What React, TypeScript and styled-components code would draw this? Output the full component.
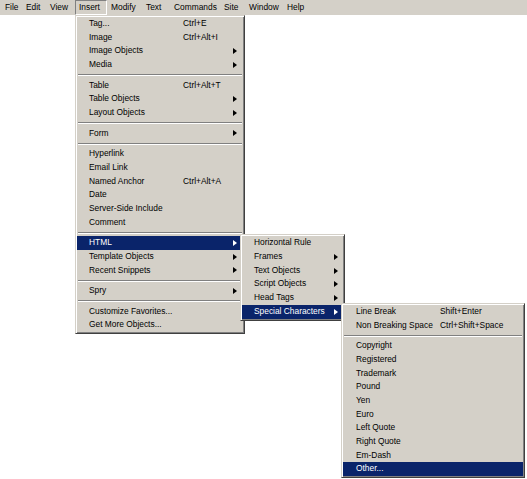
import React from "react";
import styled, { createGlobalStyle } from "styled-components";

const ROW_H = 13.7;
const SEP_H = 6.9;
const NAVY = "#0a246a";
const FACE = "#d4d0c8";

const GlobalStyle = createGlobalStyle`
  html, body { margin: 0; padding: 0; background: #ffffff; }
  body {
    font-family: "Liberation Sans", Arial, sans-serif;
    font-size: 8.4px;
    color: #000;
  }
`;

const Page = styled.div`
  position: relative;
  width: 527px;
  height: 479px;
  overflow: hidden;
  background: #ffffff;
`;

const MenuBar = styled.div`
  display: flex;
  align-items: stretch;
  height: 15px;
  padding-left: 1px;
  background: ${FACE};
`;

const MenuTitle = styled.div<{ $w: number; $pressed?: boolean }>`
  box-sizing: border-box;
  width: ${(p) => p.$w}px;
  height: 15px;
  line-height: ${(p) => (p.$pressed ? 13 : 15)}px;
  padding-left: ${(p) => (p.$pressed ? 3 : 4)}px;
  white-space: nowrap;
  border: ${(p) => (p.$pressed ? "1px solid" : "none")};
  border-color: #808080 #ffffff #ffffff #808080;
`;

const Menu = styled.div<{ $x: number; $y: number; $w: number }>`
  position: absolute;
  left: ${(p) => p.$x}px;
  top: ${(p) => p.$y}px;
  width: ${(p) => p.$w}px;
  box-sizing: border-box;
  display: flex;
  flex-direction: column;
  padding: 1px;
  background: ${FACE};
  border: 1px solid;
  border-color: ${FACE} #404040 #404040 ${FACE};
  box-shadow: inset 1px 1px #ffffff, inset -1px -1px #808080;
`;

const Row = styled.div<{ $active?: boolean; $pad: number }>`
  display: flex;
  align-items: center;
  height: ${ROW_H}px;
  line-height: ${ROW_H}px;
  padding-left: ${(p) => p.$pad}px;
  background: ${(p) => (p.$active ? NAVY : "transparent")};
  color: ${(p) => (p.$active ? "#ffffff" : "#000000")};
  white-space: nowrap;
`;

const Label = styled.span<{ $lw?: number }>`
  flex: ${(p) => (p.$lw ? `0 0 ${p.$lw}px` : "1 1 auto")};
  overflow: visible;
`;

const Shortcut = styled.span`
  flex: 1 1 auto;
`;

const Arrow = styled.span<{ $active?: boolean; $mr: number }>`
  flex: 0 0 auto;
  width: 0;
  height: 0;
  margin-right: ${(p) => p.$mr}px;
  border-top: 3.5px solid transparent;
  border-bottom: 3.5px solid transparent;
  border-left: 4px solid ${(p) => (p.$active ? "#ffffff" : "#000000")};
`;

const Separator = styled.div`
  height: ${SEP_H}px;
  display: flex;
  flex-direction: column;
  justify-content: center;
  padding: 0 1px;
  &::before {
    content: "";
    display: block;
    height: 1px;
    background: #808080;
  }
  &::after {
    content: "";
    display: block;
    height: 1px;
    background: #ffffff;
  }
`;

type Item =
  | { label: string; shortcut?: string; sub?: boolean; active?: boolean }
  | "sep";

type MenuSpec = {
  x: number;
  y: number;
  w: number;
  pad: number;
  lw?: number;
  mr: number;
  items: Item[];
};

const titles: { label: string; w: number; pressed?: boolean }[] = [
  { label: "File", w: 21 },
  { label: "Edit", w: 24 },
  { label: "View", w: 29 },
  { label: "Insert", w: 32, pressed: true },
  { label: "Modify", w: 35 },
  { label: "Text", w: 28 },
  { label: "Commands", w: 50 },
  { label: "Site", w: 25 },
  { label: "Window", w: 38 },
  { label: "Help", w: 30 },
];

const insertMenu: MenuSpec = {
  x: 75,
  y: 15,
  w: 170,
  pad: 12,
  lw: 94,
  mr: 6,
  items: [
    { label: "Tag...", shortcut: "Ctrl+E" },
    { label: "Image", shortcut: "Ctrl+Alt+I" },
    { label: "Image Objects", sub: true },
    { label: "Media", sub: true },
    "sep",
    { label: "Table", shortcut: "Ctrl+Alt+T" },
    { label: "Table Objects", sub: true },
    { label: "Layout Objects", sub: true },
    "sep",
    { label: "Form", sub: true },
    "sep",
    { label: "Hyperlink" },
    { label: "Email Link" },
    { label: "Named Anchor", shortcut: "Ctrl+Alt+A" },
    { label: "Date" },
    { label: "Server-Side Include" },
    { label: "Comment" },
    "sep",
    { label: "HTML", sub: true, active: true },
    { label: "Template Objects", sub: true },
    { label: "Recent Snippets", sub: true },
    "sep",
    { label: "Spry", sub: true },
    "sep",
    { label: "Customize Favorites..." },
    { label: "Get More Objects..." },
  ],
};

const htmlMenu: MenuSpec = {
  x: 240,
  y: 234.4,
  w: 105,
  pad: 12,
  mr: 5,
  items: [
    { label: "Horizontal Rule" },
    { label: "Frames", sub: true },
    { label: "Text Objects", sub: true },
    { label: "Script Objects", sub: true },
    { label: "Head Tags", sub: true },
    { label: "Special Characters", sub: true, active: true },
  ],
};

const charsMenu: MenuSpec = {
  x: 341,
  y: 302.9,
  w: 184,
  pad: 13,
  lw: 84,
  mr: 5,
  items: [
    { label: "Line Break", shortcut: "Shift+Enter" },
    { label: "Non Breaking Space", shortcut: "Ctrl+Shift+Space" },
    "sep",
    { label: "Copyright" },
    { label: "Registered" },
    { label: "Trademark" },
    { label: "Pound" },
    { label: "Yen" },
    { label: "Euro" },
    { label: "Left Quote" },
    { label: "Right Quote" },
    { label: "Em-Dash" },
    { label: "Other...", active: true },
  ],
};

function DropMenu({ spec }: { spec: MenuSpec }) {
  return (
    <Menu $x={spec.x} $y={spec.y} $w={spec.w}>
      {spec.items.map((it, i) =>
        it === "sep" ? (
          <Separator key={i} />
        ) : (
          <Row key={i} $active={it.active} $pad={spec.pad}>
            <Label $lw={spec.lw}>{it.label}</Label>
            <Shortcut>{it.shortcut ?? ""}</Shortcut>
            {it.sub && <Arrow $active={it.active} $mr={spec.mr} />}
          </Row>
        )
      )}
    </Menu>
  );
}

export default function App() {
  return (
    <Page>
      <GlobalStyle />
      <MenuBar>
        {titles.map((t) => (
          <MenuTitle key={t.label} $w={t.w} $pressed={t.pressed}>
            {t.label}
          </MenuTitle>
        ))}
      </MenuBar>
      <DropMenu spec={insertMenu} />
      <DropMenu spec={htmlMenu} />
      <DropMenu spec={charsMenu} />
    </Page>
  );
}
